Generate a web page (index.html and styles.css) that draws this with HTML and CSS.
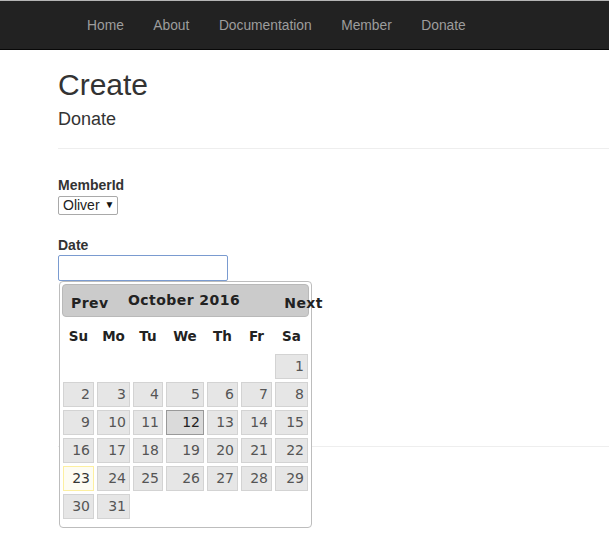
FILE: index.html
```html
<!DOCTYPE html>
<html>
<head>
<meta charset="utf-8">
<link rel="stylesheet" href="styles.css">
</head>
<body>
<nav class="navbar">
  <ul class="nav">
    <li><a href="#">Home</a></li>
    <li><a href="#">About</a></li>
    <li><a href="#">Documentation</a></li>
    <li><a href="#">Member</a></li>
    <li><a href="#">Donate</a></li>
  </ul>
</nav>
<main class="page">
  <h2 class="title">Create</h2>
  <h4 class="subtitle">Donate</h4>
  <hr class="rule">
  <div class="group">
    <label class="label">MemberId</label>
    <div class="select"><span>Oliver</span><span class="caret">▼</span></div>
  </div>
  <div class="group group-date">
    <label class="label">Date</label>
    <div class="date-wrap">
      <input class="input" type="text">
      <div class="datepicker">
        <div class="dp-header">
          <span class="dp-prev">Prev</span>
          <span class="dp-title">October 2016</span>
          <span class="dp-next">Next</span>
        </div>
        <div class="dp-grid dp-dow">
          <span>Su</span><span>Mo</span><span>Tu</span><span>We</span><span>Th</span><span>Fr</span><span>Sa</span>
        </div>
        <div class="dp-grid dp-days">
          <span class="blank"></span><span class="blank"></span><span class="blank"></span><span class="blank"></span><span class="blank"></span><span class="blank"></span><a>1</a>
          <a>2</a><a>3</a><a>4</a><a>5</a><a>6</a><a>7</a><a>8</a>
          <a>9</a><a>10</a><a>11</a><a class="active">12</a><a>13</a><a>14</a><a>15</a>
          <a>16</a><a>17</a><a>18</a><a>19</a><a>20</a><a>21</a><a>22</a>
          <a class="today">23</a><a>24</a><a>25</a><a>26</a><a>27</a><a>28</a><a>29</a>
          <a>30</a><a>31</a>
        </div>
      </div>
    </div>
  </div>
  <hr class="rule footer-rule">
</main>
</body>
</html>
```
FILE: styles.css
```css
* { box-sizing: border-box; }
html, body { margin: 0; padding: 0; background: #fff; }
body {
  min-height: 534px;
  font-family: "Liberation Sans", Arial, sans-serif;
  font-size: 14px;
  line-height: 20px;
  color: #333;
}
.navbar {
  height: 50px;
  background: #222;
  border-top: 1px solid #b5b5b5;
  border-bottom: 1px solid #080808;
}
.nav {
  list-style: none;
  margin: 0;
  padding: 0 0 0 72px;
  display: flex;
}
.nav a {
  display: block;
  padding: 15px 15px 13px;
  font-size: 13.8px;
  line-height: 20px;
  color: #9d9d9d;
  text-decoration: none;
}
.nav li + li a { margin-left: -0.5px; }
.page {
  padding-left: 58px;
}
.title {
  margin: 18px 0 0;
  font-size: 30px;
  font-weight: 500;
  line-height: 33px;
  color: #333;
}
.subtitle {
  margin: 8px 0 0;
  font-size: 18px;
  font-weight: 500;
  line-height: 20px;
}
.rule {
  margin: 19px 0 0;
  border: 0;
  border-top: 1px solid #eee;
}
.group { margin-top: 26px; }
.group-date { margin-top: 20px; }
.label {
  display: block;
  font-weight: bold;
  line-height: 20px;
}
.select {
  margin-top: 0;
  display: inline-flex;
  align-items: center;
  height: 19px;
  width: 60px;
  padding: 0 4px;
  border: 1px solid #a9a9a9;
  border-radius: 2px;
  line-height: 16px;
  color: #222;
  background: #fff;
}
.select .caret {
  margin-left: 5px;
  font-size: 10px;
  color: #111;
}
.date-wrap {
  position: relative;
  width: 170px;
}
.input {
  display: block;
  width: 170px;
  height: 26px;
  margin: 0;
  border: 1px solid #7a9bd0;
  border-radius: 2px;
  outline: none;
  background: #fff;
}
.datepicker {
  position: absolute;
  top: 26px;
  left: 1px;
  width: 253px;
  padding: 2px 2px 8px;
  background: #fff;
  border: 1px solid #bdbdbd;
  border-radius: 4px;
  font-family: "DejaVu Sans", Verdana, sans-serif;
  color: #222;
  z-index: 2;
}
.dp-header {
  display: grid;
  grid-template-columns: 1fr auto 1fr;
  height: 33px;
  background: #cbcbcb;
  border: 1px solid #b9b9b9;
  border-radius: 4px;
  font-weight: bold;
  font-size: 14px;
  letter-spacing: 0.45px;
  line-height: 16px;
  color: #222;
}
.dp-prev { justify-self: start; padding: 10px 0 0 8px; }
.dp-title { padding-top: 7px; margin-left: -3px; }
.dp-next { justify-self: end; padding-top: 10px; margin-right: -15px; }
.dp-grid {
  display: grid;
  grid-template-columns: 31px 33px 30px 38px 31px 31px 33px;
  column-gap: 3px;
  margin: 0 1px;
}
.dp-dow {
  padding: 11px 0 10px;
  font-weight: bold;
  font-size: 13.5px;
  line-height: 16px;
  text-align: center;
  color: #222;
}
.dp-days {
  row-gap: 3px;
  font-size: 14px;
  line-height: 16px;
}
.dp-days a {
  height: 25px;
  padding: 3px 3px 0 0;
  text-align: right;
  background: #e6e6e6;
  border: 1px solid #d3d3d3;
  color: #555;
}
.dp-days a.active {
  background: #dadada;
  border-color: #999;
  color: #212121;
}
.dp-days a.today {
  background: #fdfcf3;
  border-color: #fcefa1;
  color: #363636;
}
.footer-rule {
  margin-top: 165px;
}
```
